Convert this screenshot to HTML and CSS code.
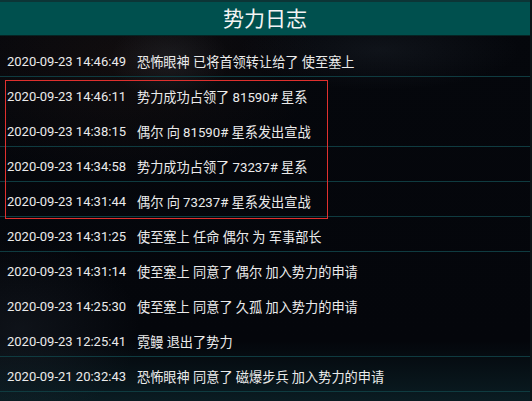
FILE: index.html
```html
<!DOCTYPE html>
<html lang="zh">
<head>
    <meta charset="UTF-8">
    <meta name="viewport" content="width=device-width, initial-scale=1.0">
    <title>势力日志</title>
    <link rel="stylesheet" href="styles.css">
</head>
<body>

    <div class="panel">
        <div class="title-bar">势力日志</div>

        <div class="log-list">
            <div class="log-row line"><span class="time">2020-09-23 14:46:49</span><span class="msg">恐怖眼神 已将首领转让给了 使至塞上</span></div>
            <div class="log-row"><span class="time">2020-09-23 14:46:11</span><span class="msg">势力成功占领了 81590# 星系</span></div>
            <div class="log-row line"><span class="time">2020-09-23 14:38:15</span><span class="msg">偶尔 向 81590# 星系发出宣战</span></div>
            <div class="log-row line"><span class="time">2020-09-23 14:34:58</span><span class="msg">势力成功占领了 73237# 星系</span></div>
            <div class="log-row line"><span class="time">2020-09-23 14:31:44</span><span class="msg">偶尔 向 73237# 星系发出宣战</span></div>
            <div class="log-row line"><span class="time">2020-09-23 14:31:25</span><span class="msg">使至塞上 任命 偶尔 为 军事部长</span></div>
            <div class="log-row"><span class="time">2020-09-23 14:31:14</span><span class="msg">使至塞上 同意了 偶尔 加入势力的申请</span></div>
            <div class="log-row"><span class="time">2020-09-23 14:25:30</span><span class="msg">使至塞上 同意了 久孤 加入势力的申请</span></div>
            <div class="log-row line"><span class="time">2020-09-23 12:25:41</span><span class="msg">霓鳗 退出了势力</span></div>
            <div class="log-row line"><span class="time">2020-09-21 20:32:43</span><span class="msg">恐怖眼神 同意了 磁爆步兵 加入势力的申请</span></div>

            <!-- highlight frame around the war entries -->
            <div class="highlight"></div>
        </div>
    </div>

</body>
</html>
```

FILE: styles.css
```css
body {
    margin: 0;
    background-color: #04060b;
    font-family: Roboto, "Noto Sans CJK SC", sans-serif;
    overflow: hidden;
}
.panel {
    width: 532px;
    height: 401px;
    background:
        radial-gradient(ellipse 60px 40px at 170px 60px, rgba(90, 100, 110, 0.18), transparent),
        radial-gradient(ellipse 140px 40px at 380px 50px, rgba(80, 95, 110, 0.14), transparent),
        radial-gradient(ellipse 120px 90px at 20px 330px, rgba(70, 85, 100, 0.16), transparent),
        radial-gradient(ellipse 200px 120px at 120px 60px, rgba(40, 25, 20, 0.35), transparent),
        linear-gradient(to bottom, #05070c, #04060b 85%, #0a1c22);
    border-right: 2px solid #0b1418;
    box-sizing: border-box;
}
.title-bar {
    height: 33px;
    border-top: 2px solid #0c3536;
    border-bottom: 1px solid #062424;
    background-color: #00504e;
    color: #f4f4f4;
    font-size: 21px;
    line-height: 35px;
    text-align: center;
}
.log-list {
    position: relative;
    padding-top: 6px;
}
.log-row {
    height: 35px;
    box-sizing: border-box;
    padding: 5px 0 0 7px;
    display: flex;
    align-items: center;
    color: #ebebeb;
    font-size: 13px;
    border-bottom: 1px solid transparent;
}
.log-row.line {
    border-bottom-color: #0f3b40;
}
.time {
    width: 130px;
}
.msg {
    white-space: nowrap;
    font-size: 13.2px;
}
.highlight {
    position: absolute;
    left: 5px;
    top: 44px;
    width: 321px;
    height: 137px;
    border: 1px solid #e0302e;
}
```
